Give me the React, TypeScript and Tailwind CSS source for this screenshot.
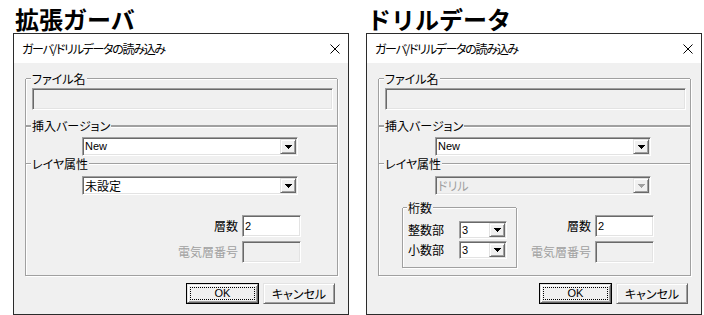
import React from 'react';

// fonts
const JP = "font-['Noto_Sans_CJK_JP',sans-serif] [font-feature-settings:'palt']";
const LAT = "font-['Liberation_Sans','Noto_Sans_CJK_JP',sans-serif]";

// 3D bevels (classic Windows look)
const sunken =
  'border border-t-[#a0a0a0] border-l-[#a0a0a0] border-r-white border-b-white shadow-[inset_1px_1px_0_#696969,inset_-1px_-1px_0_#e3e3e3]';
const raised =
  'border border-t-[#e3e3e3] border-l-[#e3e3e3] border-r-[#696969] border-b-[#696969] shadow-[inset_1px_1px_0_#fff,inset_-1px_-1px_0_#a0a0a0] bg-[#f0f0f0]';

const Line = ({ className = '', heavy }: { className?: string; heavy?: boolean }) =>
  heavy ? (
    <div className={`h-[3px] border-t-2 border-t-[#a0a0a0] border-b border-b-white ${className}`} />
  ) : (
    <div className={`h-[2px] border-t border-t-[#a0a0a0] border-b border-b-white ${className}`} />
  );

// caption row: a label on an etched line
const Caption = ({
  label,
  lead = 'w-[5px]',
  className = '',
  heavy,
}: {
  label: string;
  lead?: string;
  className?: string;
  heavy?: boolean;
}) => (
  <div className={`h-[14px] flex items-center ${className}`}>
    <Line className={lead} heavy={heavy} />
    <span className={`px-[1px] text-[12px] leading-[14px] text-black ${JP}`}>{label}</span>
    <Line className="flex-1" heavy={heavy} />
  </div>
);

const Arrow = ({ disabled }: { disabled?: boolean }) => (
  <svg width="7" height="4" viewBox="0 0 7 4" fill={disabled ? '#a0a0a0' : '#000'}>
    <path d="M0 0h7v1H0zM1 1h5v1H1zM2 2h3v1H2zM3 3h1v1H3z" />
  </svg>
);

const Combo = ({
  value,
  size,
  latin,
  disabled,
}: {
  value: string;
  size: string;
  latin?: boolean;
  disabled?: boolean;
}) => (
  <div className={`flex ${size} ${sunken} ${disabled ? 'bg-[#f0f0f0]' : 'bg-white'}`}>
    <div
      className={`flex-1 flex items-center pl-[2px] ${
        latin ? `text-[11px] ${LAT}` : `text-[12px] ${JP}`
      } ${disabled ? 'text-[#a0a0a0]' : 'text-black'}`}
    >
      {value}
    </div>
    <div className={`w-[16px] my-[1px] mr-[1px] flex items-center justify-center ${raised}`}>
      <Arrow disabled={disabled} />
    </div>
  </div>
);

const Field = ({ value, disabled }: { value?: string; disabled?: boolean }) => (
  <div
    className={`w-[59px] h-[22px] flex items-center pl-[2px] text-[11px] text-black ${LAT} ${sunken} ${
      disabled ? 'bg-[#f0f0f0]' : 'bg-white'
    }`}
  >
    {value}
  </div>
);

const Layers = () => (
  <div className="mt-[20px] mr-[36px] flex flex-col gap-[4px]">
    <div className="flex items-center justify-end gap-[4px]">
      <span className={`text-[12px] text-black ${JP}`}>層数</span>
      <Field value="2" />
    </div>
    <div className="flex items-center justify-end gap-[4px]">
      <span className={`text-[12px] text-[#a0a0a0] ${JP}`}>電気層番号</span>
      <Field disabled />
    </div>
  </div>
);

const Digits = () => (
  <div className="mt-[13px] ml-[23px] w-[115px] h-[60px] flex flex-col border-x border-b border-[#a0a0a0] shadow-[inset_1px_0_0_#fff,1px_1px_0_#fff]">
    <Caption label="桁数" lead="w-[4px]" className="-mt-[7px]" />
    <div className="mt-[6px] flex items-center">
      <span className={`ml-[5px] w-[51px] text-[12px] text-black ${JP}`}>整数部</span>
      <Combo value="3" latin size="w-[48px] h-[18px]" />
    </div>
    <div className="mt-[2px] flex items-center">
      <span className={`ml-[5px] w-[51px] text-[12px] text-black ${JP}`}>小数部</span>
      <Combo value="3" latin size="w-[48px] h-[18px]" />
    </div>
  </div>
);

const Dialog = ({ drill }: { drill?: boolean }) => (
  <div className="w-[336px] h-[282px] flex flex-col border border-[#2b2b2b] bg-[#f0f0f0]">
    {/* title bar */}
    <div className="h-[29px] bg-white flex items-center justify-between pl-[8px] pr-[8px]">
      <span className={`text-[12px] tracking-[-1.3px] text-black ${JP}`}>ガーバ/ドリルデータの読み込み</span>
      <svg width="10" height="10" viewBox="0 0 10 10" stroke="#000" strokeWidth="1">
        <path d="M0.5 0.5L9.5 9.5M9.5 0.5L0.5 9.5" />
      </svg>
    </div>

    {/* settings group */}
    <div className="mt-[16px] ml-[11px] w-[313px] h-[197px] flex flex-col border-x border-b border-[#a0a0a0] shadow-[inset_1px_0_0_#fff,1px_1px_0_#fff]">
      <Caption label="ファイル名" className="-mt-[7px]" />
      <div className={`mt-[2px] ml-[6px] w-[301px] h-[22px] bg-[#f0f0f0] ${sunken}`} />

      <Caption label="挿入バージョン" className="mt-[9px]" heavy />
      <div className="mt-[4px] ml-[56px]">
        <Combo value="New" latin size="w-[216px] h-[19px]" />
      </div>

      <Caption label="レイヤ属性" className="mt-[1px]" />
      <div className="mt-[5px] ml-[56px]">
        {drill ? (
          <Combo value="ドリル" disabled size="w-[216px] h-[19px]" />
        ) : (
          <Combo value="未設定" size="w-[216px] h-[19px]" />
        )}
      </div>

      <div className="flex items-start">
        {drill && <Digits />}
        <div className="flex-1" />
        <Layers />
      </div>
    </div>

    {/* buttons */}
    <div className="mt-[7px] mr-[13px] flex justify-end gap-[4px]">
      <div className="w-[73px] h-[21px] border border-black flex">
        <div className={`flex-1 flex p-[2px] ${raised}`}>
          <div className={`flex-1 flex items-center justify-center border border-dotted border-black text-[11px] text-black ${LAT}`}>
            OK
          </div>
        </div>
      </div>
      <div className={`w-[72px] h-[21px] flex items-center justify-center text-[12px] text-black ${JP} ${raised}`}>
        キャンセル
      </div>
    </div>
  </div>
);

export default function App() {
  return (
    <div className="w-[704px] h-[315px] bg-white flex gap-[17px] pl-[13px] overflow-hidden">
      <div className="flex flex-col">
        <div className={`h-[33px] pt-[7px] pl-[2px] text-[24px] leading-[24px] font-bold text-black ${JP} [font-feature-settings:normal]`}>
          拡張ガーバ
        </div>
        <Dialog />
      </div>
      <div className="flex flex-col">
        <div className={`h-[33px] pt-[7px] pl-[1px] text-[24px] leading-[24px] font-bold text-black ${JP} [font-feature-settings:normal]`}>
          ドリルデータ
        </div>
        <Dialog drill />
      </div>
    </div>
  );
}
